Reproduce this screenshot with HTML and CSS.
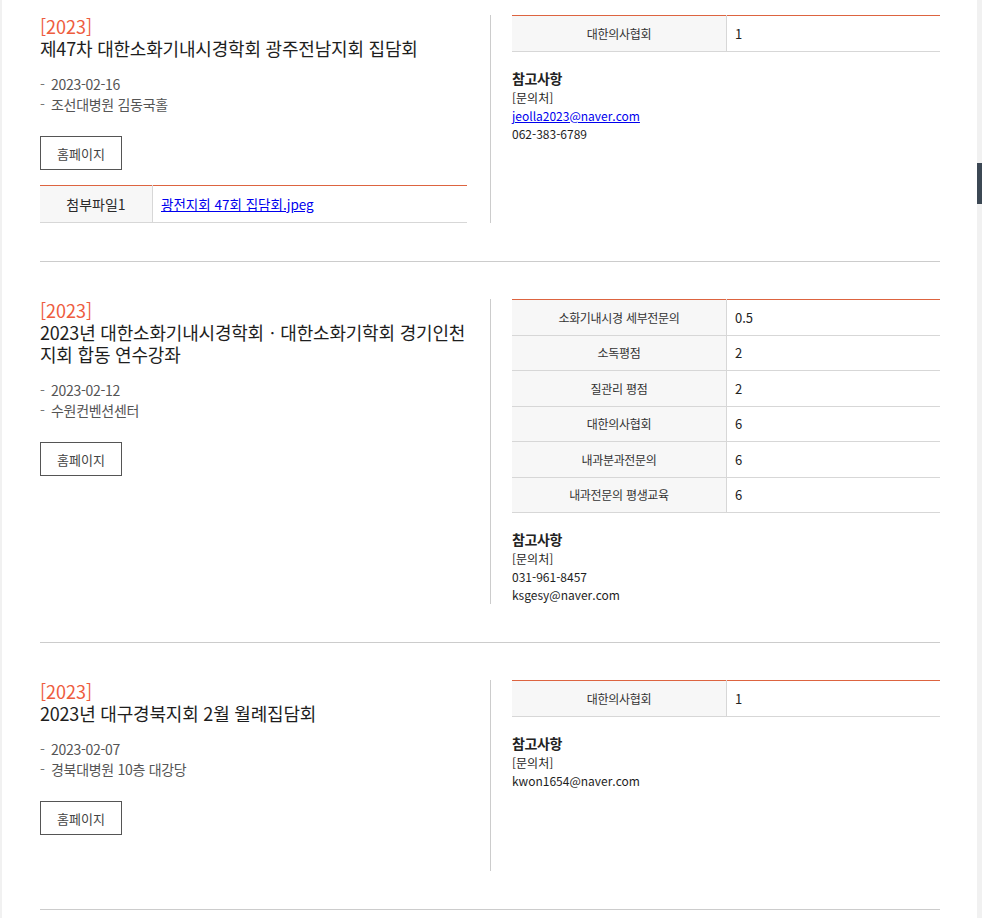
FILE: index.html
```html
<!DOCTYPE html>
<html lang="ko">
<head>
<meta charset="utf-8">
<title>학술행사</title>
<link rel="stylesheet" href="styles.css">
</head>
<body>
<div class="page">
  <div class="list">
    <div class="item">
      <div class="left">
        <p class="year">[2023]</p>
        <h3 class="title">제47차 대한소화기내시경학회 광주전남지회 집담회</h3>
        <ul class="meta">
          <li>2023-02-16</li>
          <li>조선대병원 김동국홀</li>
        </ul>
        <a class="btn" href="#">홈페이지</a>
        <table class="tbl file">
          <tr><th>첨부파일1</th><td><a href="#">광전지회 47회 집담회.jpeg</a></td></tr>
        </table>
      </div>
      <div class="right">
        <table class="tbl score">
          <tr><th>대한의사협회</th><td>1</td></tr>
        </table>
        <div class="note">
          <h4>참고사항</h4>
          <p>[문의처]<br><a href="#">jeolla2023@naver.com</a><br>062-383-6789</p>
        </div>
      </div>
    </div>

    <div class="item">
      <div class="left">
        <p class="year">[2023]</p>
        <h3 class="title">2023년 대한소화기내시경학회ㆍ대한소화기학회 경기인천 지회 합동 연수강좌</h3>
        <ul class="meta">
          <li>2023-02-12</li>
          <li>수원컨벤션센터</li>
        </ul>
        <a class="btn" href="#">홈페이지</a>
      </div>
      <div class="right">
        <table class="tbl score">
          <tr><th>소화기내시경 세부전문의</th><td>0.5</td></tr>
          <tr><th>소독평점</th><td>2</td></tr>
          <tr><th>질관리 평점</th><td>2</td></tr>
          <tr><th>대한의사협회</th><td>6</td></tr>
          <tr><th>내과분과전문의</th><td>6</td></tr>
          <tr><th>내과전문의 평생교육</th><td>6</td></tr>
        </table>
        <div class="note">
          <h4>참고사항</h4>
          <p>[문의처]<br>031-961-8457<br>ksgesy@naver.com</p>
        </div>
      </div>
    </div>

    <div class="item">
      <div class="left no-file">
        <p class="year">[2023]</p>
        <h3 class="title">2023년 대구경북지회 2월 월례집담회</h3>
        <ul class="meta">
          <li>2023-02-07</li>
          <li>경북대병원 10층 대강당</li>
        </ul>
        <a class="btn" href="#">홈페이지</a>
      </div>
      <div class="right">
        <table class="tbl score">
          <tr><th>대한의사협회</th><td>1</td></tr>
        </table>
        <div class="note">
          <h4>참고사항</h4>
          <p>[문의처]<br>kwon1654@naver.com</p>
        </div>
      </div>
    </div>
  </div>
</div>
<div class="scrollbar"><div class="thumb"></div></div>
</body>
</html>
```

FILE: styles.css
```css
html {
  background: #f1f1f1;
}
body {
  margin: 0;
  font-family: "Noto Sans CJK KR", "Noto Sans", sans-serif;
  color: #222;
  overflow: hidden;
  height: 918px;
}
.page {
  margin: 0 5px 0 2px;
  background: #fff;
  height: 918px;
  overflow: hidden;
}
.list {
  margin: 0 0 0 38px;
  width: 900px;
}
.item {
  display: flex;
  padding: 37px 0 38px;
  border-bottom: 1px solid #cccccc;
}
.item:first-child {
  padding-top: 15px;
}
.left {
  flex: 0 0 427px;
  padding-right: 23px;
}
.left.no-file {
  padding-bottom: 36px;
}
.right {
  flex: 1;
  border-left: 1px solid #cccccc;
  padding-left: 21px;
}
.year {
  margin: 0;
  font-size: 18px;
  line-height: 22px;
  color: #ee5c3e;
}
.title {
  margin: 0;
  font-size: 18px;
  line-height: 22px;
  font-weight: 400;
  color: #1e1e1e;
  letter-spacing: -0.2px;
  word-break: keep-all;
}
.meta {
  list-style: none;
  margin: 16px 0 0;
  padding: 0;
  font-size: 14px;
  line-height: 19.5px;
  color: #555;
}
.meta li {
  position: relative;
  padding-left: 11px;
  letter-spacing: -0.3px;
}
.meta li::before {
  content: "-";
  position: absolute;
  left: 0;
  top: 0;
  color: #777;
}
.btn {
  display: inline-flex;
  align-items: center;
  justify-content: center;
  margin-top: 22px;
  width: 82px;
  height: 34px;
  box-sizing: border-box;
  border: 1px solid #555;
  font-size: 13px;
  color: #444;
  text-decoration: none;
  vertical-align: top;
}
.tbl {
  width: 100%;
  border-collapse: collapse;
  border-top: 1px solid #dd6440;
}
.tbl th {
  background: #f7f7f7;
  font-weight: 400;
  text-align: center;
  color: #333;
  border-right: 1px solid #d7d7d7;
  border-bottom: 1px solid #d7d7d7;
  padding: 0;
}
.tbl td {
  border-bottom: 1px solid #d7d7d7;
  padding: 0 8px;
  text-align: left;
}
.file {
  margin-top: 15px;
}
.file th {
  width: 112px;
  height: 36px;
  font-size: 14px;
  color: #2a2a2a;
}
.file td {
  font-size: 13.5px;
}
.file td a {
  color: #0000ee;
  text-decoration: underline;
}
.score th {
  width: 214px;
  height: 34.5px;
  font-size: 12px;
  letter-spacing: -0.3px;
}
.score td {
  font-size: 13px;
}
.note {
  margin-top: 16px;
}
.note h4 {
  margin: 0 0 1px;
  font-size: 14px;
  line-height: 20px;
  font-weight: 700;
  color: #222;
  letter-spacing: -0.4px;
}
.note p {
  margin: 0;
  font-size: 12px;
  line-height: 18px;
  color: #1e1e1e;
}
.note a {
  color: #0000ee;
  text-decoration: underline;
}
.scrollbar {
  position: fixed;
  top: 0;
  right: 0;
  width: 5px;
  height: 100%;
  background: #f1f1f1;
}
.thumb {
  position: absolute;
  top: 163px;
  left: 0;
  width: 5px;
  height: 41px;
  background: #3c4854;
}
```
